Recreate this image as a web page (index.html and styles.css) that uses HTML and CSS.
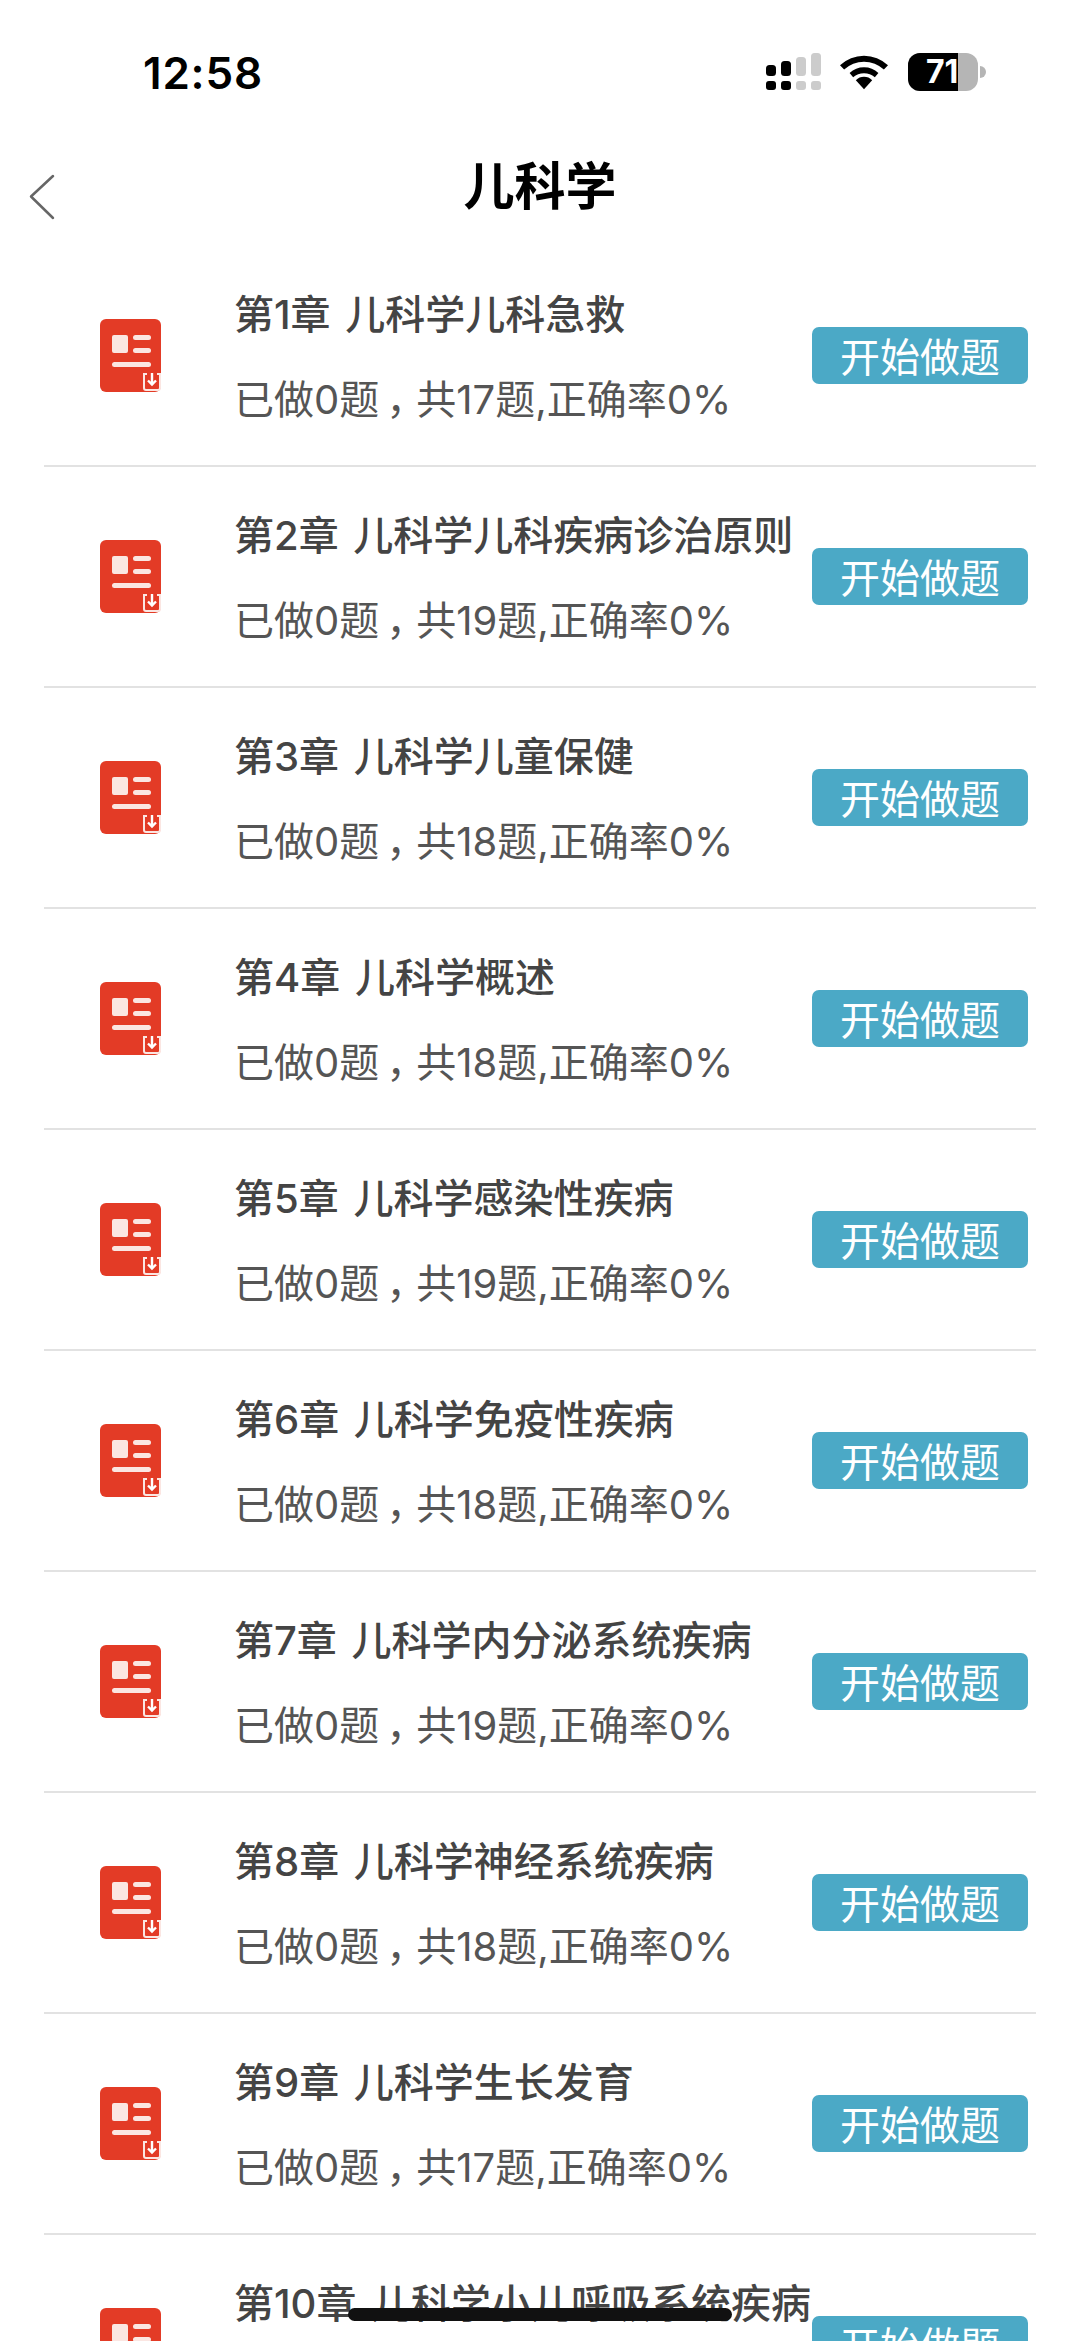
FILE: index.html
```html
<!DOCTYPE html>
<html lang="zh-CN">
<head>
    <meta charset="UTF-8">
    <meta name="viewport" content="width=device-width, initial-scale=1.0">
    <title>儿科学</title>
    <link rel="stylesheet" href="styles.css">
</head>
<body>

<svg class="defs" width="0" height="0">
    <symbol id="chapter-icon" viewBox="0 0 62 74">
        <rect x="0" y="0" width="61" height="73" rx="6" fill="#e33b26"/>
        <rect x="12" y="16" width="16" height="18" rx="2" fill="#fbe6e2"/>
        <rect x="33" y="16" width="18" height="5" rx="2.5" fill="#fbe6e2"/>
        <rect x="33" y="29" width="18" height="5" rx="2.5" fill="#fbe6e2"/>
        <rect x="12" y="43" width="39" height="5" rx="2.5" fill="#fbe6e2"/>
        <path d="M47 55h-3v14a2 2 0 0 0 2 2h12a2 2 0 0 0 2-2V55h-3" fill="none" stroke="#fbe6e2" stroke-width="2"/>
        <path d="M52 54v11M48 61.500l4 4 4-4" fill="none" stroke="#fff" stroke-width="2.400"/>
    </symbol>
</svg>

<div class="status-bar">
    <span class="time">12:58</span>
    <div class="status-icons">
        <svg class="signal" width="55" height="38" viewBox="0 0 55 38">
            <rect x="0" y="12" width="10" height="11" rx="3.500"/>
            <rect x="15" y="8" width="10" height="15" rx="3.500"/>
            <rect x="30" y="4" width="10" height="19" rx="3.500" fill="#ccc"/>
            <rect x="45" y="0" width="10" height="23" rx="3.500" fill="#ccc"/>
            <rect x="0" y="28" width="10" height="9" rx="3"/>
            <rect x="15" y="28" width="10" height="9" rx="3"/>
            <rect x="30" y="28" width="10" height="9" rx="3" fill="#ccc"/>
            <rect x="45" y="28" width="10" height="9" rx="3" fill="#ccc"/>
        </svg>
        <svg class="wifi" width="48" height="36" viewBox="0 0 50 36">
            <path d="M25 36l-8.500-9.500a12 12 0 0 1 17 0z"/>
            <path d="M25 13a22 22 0 0 1 15 6l-3.700 4.500a17 17 0 0 0-22.600 0L10 19a22 22 0 0 1 15-6z"/>
            <path d="M25 1a37 37 0 0 1 25 10l-4.300 4.500a30 30 0 0 0-41.400 0L0 11A37 37 0 0 1 25 1z"/>
        </svg>
        <div class="battery">
            <div class="battery-body">
                <div class="battery-fill"></div>
                <span class="battery-num">71</span>
            </div>
            <div class="battery-cap"></div>
        </div>
    </div>
</div>

<div class="nav-bar">
    <svg class="back" width="26" height="46" viewBox="0 0 26 46">
        <path d="M24 2L2 22.500 24 44" fill="none" stroke="#666" stroke-width="2.500" stroke-linecap="round" stroke-linejoin="round"/>
    </svg>
    <h1>儿科学</h1>
</div>

<div class="chapter-list">
    <div class="chapter">
        <svg class="chapter-icon"><use href="#chapter-icon"/></svg>
        <div class="chapter-info">
            <div class="chapter-name">第1章 儿科学儿科急救</div>
            <div class="chapter-stat">已做0题<span class="comma">，</span>共17题,正确率0%</div>
        </div>
        <div class="start-btn">开始做题</div>
    </div>
    <div class="chapter">
        <svg class="chapter-icon"><use href="#chapter-icon"/></svg>
        <div class="chapter-info">
            <div class="chapter-name">第2章 儿科学儿科疾病诊治原则</div>
            <div class="chapter-stat">已做0题<span class="comma">，</span>共19题,正确率0%</div>
        </div>
        <div class="start-btn">开始做题</div>
    </div>
    <div class="chapter">
        <svg class="chapter-icon"><use href="#chapter-icon"/></svg>
        <div class="chapter-info">
            <div class="chapter-name">第3章 儿科学儿童保健</div>
            <div class="chapter-stat">已做0题<span class="comma">，</span>共18题,正确率0%</div>
        </div>
        <div class="start-btn">开始做题</div>
    </div>
    <div class="chapter">
        <svg class="chapter-icon"><use href="#chapter-icon"/></svg>
        <div class="chapter-info">
            <div class="chapter-name">第4章 儿科学概述</div>
            <div class="chapter-stat">已做0题<span class="comma">，</span>共18题,正确率0%</div>
        </div>
        <div class="start-btn">开始做题</div>
    </div>
    <div class="chapter">
        <svg class="chapter-icon"><use href="#chapter-icon"/></svg>
        <div class="chapter-info">
            <div class="chapter-name">第5章 儿科学感染性疾病</div>
            <div class="chapter-stat">已做0题<span class="comma">，</span>共19题,正确率0%</div>
        </div>
        <div class="start-btn">开始做题</div>
    </div>
    <div class="chapter">
        <svg class="chapter-icon"><use href="#chapter-icon"/></svg>
        <div class="chapter-info">
            <div class="chapter-name">第6章 儿科学免疫性疾病</div>
            <div class="chapter-stat">已做0题<span class="comma">，</span>共18题,正确率0%</div>
        </div>
        <div class="start-btn">开始做题</div>
    </div>
    <div class="chapter">
        <svg class="chapter-icon"><use href="#chapter-icon"/></svg>
        <div class="chapter-info">
            <div class="chapter-name">第7章 儿科学内分泌系统疾病</div>
            <div class="chapter-stat">已做0题<span class="comma">，</span>共19题,正确率0%</div>
        </div>
        <div class="start-btn">开始做题</div>
    </div>
    <div class="chapter">
        <svg class="chapter-icon"><use href="#chapter-icon"/></svg>
        <div class="chapter-info">
            <div class="chapter-name">第8章 儿科学神经系统疾病</div>
            <div class="chapter-stat">已做0题<span class="comma">，</span>共18题,正确率0%</div>
        </div>
        <div class="start-btn">开始做题</div>
    </div>
    <div class="chapter">
        <svg class="chapter-icon"><use href="#chapter-icon"/></svg>
        <div class="chapter-info">
            <div class="chapter-name">第9章 儿科学生长发育</div>
            <div class="chapter-stat">已做0题<span class="comma">，</span>共17题,正确率0%</div>
        </div>
        <div class="start-btn">开始做题</div>
    </div>
    <div class="chapter">
        <svg class="chapter-icon"><use href="#chapter-icon"/></svg>
        <div class="chapter-info">
            <div class="chapter-name">第10章 儿科学小儿呼吸系统疾病</div>
            <div class="chapter-stat">已做0题<span class="comma">，</span>共18题,正确率0%</div>
        </div>
        <div class="start-btn">开始做题</div>
    </div>
</div>

<div class="home-bar"></div>

</body>
</html>
```

FILE: styles.css
```css
html, body { margin: 0; height: 2341px; overflow: hidden; background: #fff; }
body { position: relative; font-family: Inter, "Noto Sans CJK SC", sans-serif; }
.defs { position: absolute; }

/* Barre de statut */
.status-bar { height: 121px; box-sizing: border-box; padding: 46px 0 0 143px; display: flex; justify-content: space-between; }
.time { font-size: 44px; font-weight: 600; line-height: 54px; letter-spacing: 0.8px; color: #000; }
.status-icons { display: flex; align-items: flex-start; padding-right: 94px; }
.signal { margin: 7px 19px 0 0; }
.wifi { margin: 8px 20px 0 0; }
.battery { display: flex; align-items: center; margin-top: 7px; }
.battery-body { position: relative; width: 70px; height: 38px; border-radius: 12px; background: #b5b5b5; overflow: hidden; }
.battery-fill { width: 50px; height: 100%; background: #000; }
.battery-num { position: absolute; left: 0; top: 0; width: 50px; padding-left: 18px; overflow: hidden; box-sizing: border-box; font-size: 32px; font-weight: 700; line-height: 38px; color: #fff; white-space: nowrap; }
.battery-cap { width: 6px; height: 12px; margin-left: 2px; background: #b5b5b5; border-radius: 0 6px 6px 0; }

/* Navigation */
.nav-bar { position: relative; height: 125px; display: flex; align-items: center; justify-content: center; }
.nav-bar h1 { margin: 6px 0 0; font-size: 51px; font-weight: 600; line-height: 70px; color: #000; }
.back { position: absolute; left: 29px; top: 53px; }

/* Chapitres */
.chapter-list { margin: 0 44px; }
.chapter { height: 221px; box-sizing: border-box; padding: 0 8px 0 56px; display: flex; align-items: center; border-bottom: 2px solid #e2e2e2; }
.chapter-icon { flex: none; width: 62px; height: 74px; margin-right: 72px; }
.chapter-info { flex: 1; min-width: 0; }
.chapter-name { margin-top: 4px; font-size: 40px; font-weight: 500; line-height: 56px; word-spacing: 4px; color: #444; white-space: nowrap; }
.chapter-stat { margin-top: 29px; font-size: 40px; line-height: 56px; color: #555; white-space: nowrap; }
.comma { margin-left: 7px; letter-spacing: -10px; }
.start-btn { flex: none; width: 216px; height: 57px; border-radius: 7px; background: #4ba9c6; color: #fff; font-family: "Noto Sans CJK SC", sans-serif; font-size: 40px; line-height: 57px; text-align: center; }

.home-bar { position: absolute; left: 348px; top: 2308px; width: 384px; height: 13px; border-radius: 7px; background: #111; }
```
